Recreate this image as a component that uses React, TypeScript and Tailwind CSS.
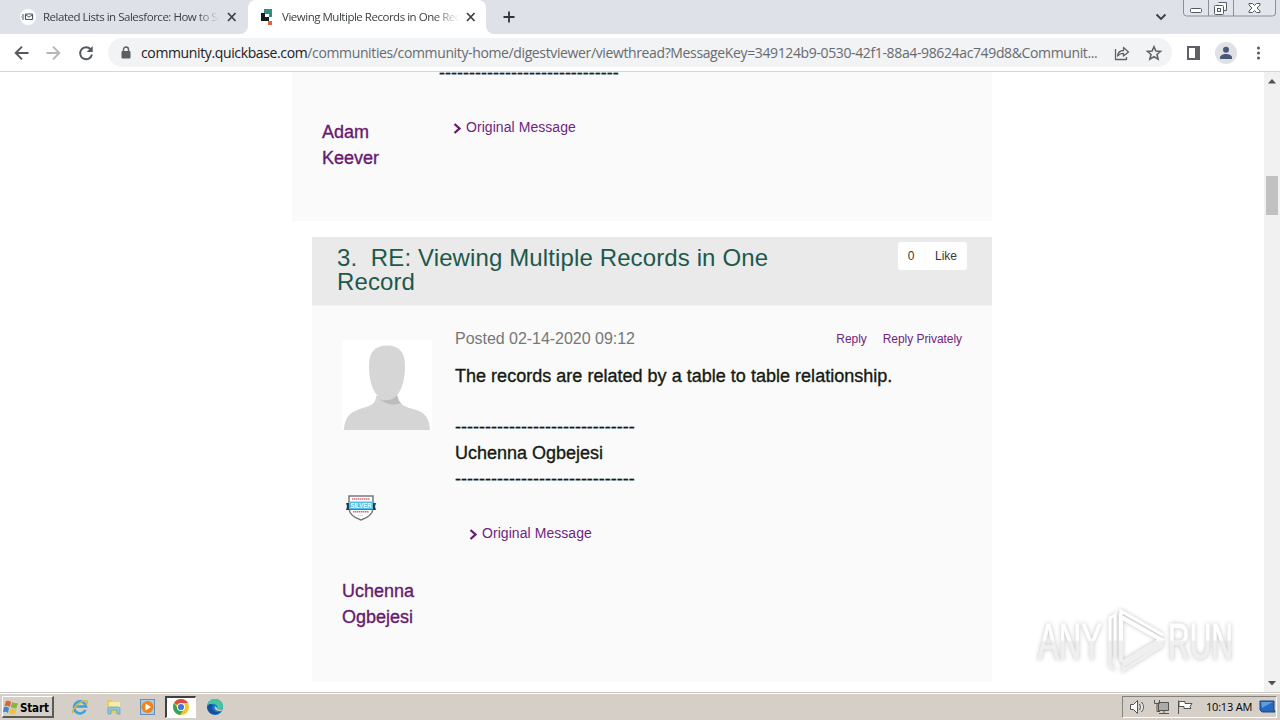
import React from "react";

const DASHES = "------------------------------";
const UI = "font-['Open_Sans','Noto_Sans',sans-serif]";

function MailFavicon() {
  return (
    <svg width="16" height="16" viewBox="0 0 16 16" className="shrink-0">
      <circle cx="8" cy="8" r="8" fill="#fff" />
      <rect x="5.5" y="5" width="7" height="5.5" rx="0.5" fill="#fff" stroke="#4b5563" strokeWidth="1.2" />
      <path d="M5.5 5.5 9 8.2l3.500-2.700M2 6h2M1.500 8h2.500M2 10h2" fill="none" stroke="#4b5563" strokeWidth="1" />
    </svg>
  );
}

function QuickbaseFavicon() {
  return (
    <svg width="14" height="18" viewBox="0 0 14 18" className="shrink-0">
      <path d="M4 1h8v8H9V6H4z" fill="#2f8f85" />
      <path d="M1 5h4v4h4v4H1z" fill="#171d1b" />
      <rect x="8" y="13" width="4" height="4" fill="#e2643f" />
    </svg>
  );
}

function CloseX() {
  return (
    <svg width="10" height="10" viewBox="0 0 10 10" className="shrink-0">
      <path d="M1 1l7.500 8M8.500 1 1 9" stroke="#3c4043" strokeWidth="1.7" />
    </svg>
  );
}

function TabStrip() {
  return (
    <div className="relative flex h-[34px] shrink-0 bg-[#dee1e8]">
      <div className="flex h-[34px] w-[248px] items-center pl-[20px]">
        <MailFavicon />
        <span className="ml-[7px] w-[178px] overflow-hidden whitespace-nowrap text-[11.5px] tracking-[-0.48px] text-[#3c4043] [mask-image:linear-gradient(to_right,#000_86%,transparent_99%)]">
          Related Lists in Salesforce: How to Se
        </span>
        <span className="ml-[6px]"><CloseX /></span>
      </div>
      <div className="relative flex h-[34px] w-[238px] items-center rounded-t-[8px] bg-white pl-[12px]">
        <svg className="absolute bottom-0 left-[-8px]" width="8" height="8"><path d="M8 0v8H0A8 8 0 0 0 8 0z" fill="#fff" /></svg>
        <svg className="absolute right-[-8px] bottom-0" width="8" height="8"><path d="M0 0v8h8A8 8 0 0 1 0 0z" fill="#fff" /></svg>
        <QuickbaseFavicon />
        <span className="ml-[8px] w-[177px] overflow-hidden whitespace-nowrap text-[11.5px] tracking-[-0.48px] text-[#3c4043] [mask-image:linear-gradient(to_right,#000_86%,transparent_100%)]">
          Viewing Multiple Records in One Recor
        </span>
        <span className="ml-[7px]"><CloseX /></span>
      </div>
      <svg width="12" height="12" viewBox="0 0 12 12" className="mt-[11px] ml-[17px]">
        <path d="M6 .5v11M.5 6h11" stroke="#303438" strokeWidth="1.8" />
      </svg>
      <svg width="12" height="8" viewBox="0 0 12 8" className="mt-[13px] ml-auto">
        <path d="M1.500 1.500 6 6l4.500-4.500" fill="none" stroke="#3c4043" strokeWidth="1.900" />
      </svg>
      <svg width="93" height="17" viewBox="0 0 93 17" className="mr-[4px] ml-[16px]">
        <path d="M.5 0v13q0 3 3 3h86q3 0 3-3V0M25.500 0v16M50.500 0v16" fill="#e2e5eb" stroke="#8b8f98" />
        <rect x="7.500" y="8.500" width="11" height="4" rx="1" fill="#fff" stroke="#555a62" />
        <path d="M35.500 2.500h8v8h-3" fill="#fff" stroke="#555a62" />
        <rect x="31.500" y="5.500" width="9" height="9" rx="1" fill="#fff" stroke="#555a62" />
        <rect x="34.500" y="8.500" width="3" height="3" fill="#fff" stroke="#555a62" />
        <path d="M66 3.500h3.500l2 2 2-2H77v1.500l-3 3 3 3v1.500h-3.500l-2-2-2 2H66V11l3-3-3-3z" fill="#fff" stroke="#555a62" />
      </svg>
    </div>
  );
}

function Toolbar() {
  return (
    <div className="flex h-[38px] shrink-0 items-center border-b border-[#d3d6d3] bg-white">
      <svg width="96" height="20" viewBox="0 0 96 20" className="mr-[12px] shrink-0" fill="none" strokeWidth="1.900">
        <path d="M28.500 10H16.500M22 3.700 15.700 10l6.300 6.300" stroke="#55585c" />
        <path d="M46.500 10h12M53 3.700l6.300 6.300-6.300 6.300" stroke="#b4b6b9" />
        <path d="M90.700 6.300A6 6 0 1 0 92 11.500" stroke="#55585c" />
        <path d="M92.700 3v6h-6z" fill="#55585c" />
      </svg>
      <div className="flex h-[29px] w-[1064px] shrink-0 items-center rounded-full bg-[#f1f3f4] pl-[13px]">
        <svg width="10" height="14" viewBox="0 0 10 14" className="shrink-0">
          <rect x=".5" y="5" width="9" height="7.500" rx="1" fill="#5b5e62" />
          <path d="M2.500 6V3.500a2.500 2.500 0 0 1 5 0V6" fill="none" stroke="#5b5e62" strokeWidth="1.400" />
        </svg>
        <span className="ml-[10px] w-[962px] whitespace-nowrap text-[14px] tracking-[-0.37px] text-[#676b70]">
          <span className="text-[#202124]">community.quickbase.com</span>
          /communities/community-home/digestviewer/viewthread?MessageKey=349124b9-0530-42f1-88a4-98624ac749d8&amp;Communit...
        </span>
        <svg width="50" height="18" viewBox="0 0 50 18" className="ml-[10px] shrink-0" fill="none" stroke="#5f6368" strokeWidth="1.300">
          <path d="M2.500 5v10.500h11V13M4.500 12c.5-4 3-5.500 6-5.500V3.500l5 4.500-5 4v-2.700c-3 0-4.500.7-6 2.700z" strokeLinejoin="round" />
          <path d="M41 2.800l1.900 4.300 4.600.4-3.500 3 1.100 4.600L41 12.700l-4.100 2.400L38 10.500l-3.500-3 4.600-.4z" strokeWidth="1.600" />
        </svg>
      </div>
      <svg width="92" height="24" viewBox="0 0 92 24" className="ml-[8px] shrink-0">
        <rect x="8" y="6" width="11" height="12" fill="none" stroke="#5f6063" strokeWidth="2" />
        <rect x="15" y="6" width="5" height="12" fill="#5f6063" />
        <circle cx="46" cy="12" r="11" fill="#dfe1e5" />
        <circle cx="46" cy="8.800" r="3" fill="#4a5878" />
        <path d="M40 18v-1.500c0-2 3-3.500 6-3.500s6 1.500 6 3.500V18z" fill="#4a5878" />
        <g fill="#55585c"><circle cx="78.500" cy="7" r="1.500" /><circle cx="78.500" cy="12" r="1.500" /><circle cx="78.500" cy="17" r="1.500" /></g>
      </svg>
    </div>
  );
}

function OriginalMessage() {
  return (
    <a className="flex h-[20px] items-center gap-[4px] whitespace-nowrap text-[14px] tracking-[0.06px] text-[#6f2480]">
      <svg width="9" height="11" viewBox="0 0 9 11" className="mt-[2px]">
        <path d="M1.500 1 6.500 5.500 1.500 10" fill="none" stroke="#67196f" strokeWidth="2.300" />
      </svg>
      Original Message
    </a>
  );
}

function Avatar() {
  return (
    <svg width="90" height="90" viewBox="0 0 90 90" className="block">
      <rect width="90" height="90" fill="#fff" />
      <path d="M34 56c0 6-3 9-10 11C11 71 3 74 2 90h86c-1-16-8-19-21-22-8-3-10-6-11-12z" fill="#d5d5d5" />
      <path d="M36 58c5 4 13 3 19-4 0 4 1 7 4 9-8 3-16 1-23-5z" fill="#bcbcbc" />
      <path d="M45 5.500c13 0 18 7.500 18 20.500 0 18-6 34-18 34S27 44 27 26C27 13 32 5.500 45 5.500z" fill="#d6d6d6" />
    </svg>
  );
}

function SilverBadge() {
  return (
    <svg width="32" height="28" viewBox="0 0 32 28" className="block">
      <path d="M4 2h24v12c0 6-6 10-12 12C10 24 4 20 4 14z" fill="#fff" stroke="#77797c" strokeWidth="1.500" />
      <path d="M1 9h30l-1 3.500 1 3.500H1l1-3.500z" fill="#243f52" />
      <rect x="4" y="7.500" width="24" height="8" fill="#55bfe8" />
      <text x="16" y="14" textAnchor="middle" textLength="21" lengthAdjust="spacingAndGlyphs" fontSize="7" fontWeight="700" fill="#e8faff" fontFamily="Liberation Sans">SILVER</text>
      <path d="M7 5h18M8 17.800h16" stroke="#d0697c" strokeWidth="1.600" strokeDasharray="1.500 .5" />
      <path d="M13 21.500h6" stroke="#c8c8c8" strokeDasharray="1 1" />
    </svg>
  );
}

function Watermark() {
  return (
    <svg width="204" height="70" viewBox="0 0 204 70" className="absolute top-[533px] left-[1033px] [filter:drop-shadow(0_0_2px_rgba(0,0,0,0.24))]">
      <defs>
        <linearGradient id="wm" x1="0" y1="0" x2="0" y2="70" gradientUnits="userSpaceOnUse">
          <stop offset=".5" stopColor="#fff" />
          <stop offset=".52" stopColor="#efefef" />
        </linearGradient>
      </defs>
      <g fill="url(#wm)" stroke="url(#wm)" strokeWidth="1" fontFamily="Liberation Sans Narrow, Liberation Sans, sans-serif" fontSize="50">
        <text x="5" y="54" textLength="64" lengthAdjust="spacingAndGlyphs">ANY</text>
        <text x="135" y="54" textLength="65" lengthAdjust="spacingAndGlyphs">RUN</text>
      </g>
      <g fill="none" stroke="url(#wm)" strokeWidth="4">
        <path d="M88 57V12l40 22.500L89 58" />
        <path d="M82 53V10l-5 3v48l5 3M88 12V6l42 24M131 36 90 61v4l40-25" strokeWidth="3" />
      </g>
    </svg>
  );
}

function ScrollBar() {
  return (
    <div className="flex w-[16px] shrink-0 flex-col items-center bg-[#f1f1f1]">
      <svg width="8" height="5" className="mt-[7px]"><path d="M0 4.500h8L4 0z" fill="#505050" /></svg>
      <div className="mt-[92px] h-[39px] w-[12px] bg-[#c1c1c1]" />
      <svg width="8" height="5" className="mt-auto mb-[6px]"><path d="M0 0h8L4 4.500z" fill="#505050" /></svg>
    </div>
  );
}

function Thread() {
  return (
    <main className="relative flex h-[620px] shrink-0 overflow-hidden bg-white font-['Liberation_Sans',Arial,sans-serif]">
      <div className="flex flex-1 flex-col pl-[292px]">
        <section className="flex h-[149px] w-[700px] shrink-0 bg-[#fafafa]">
          <a className="w-[147px] pt-[47px] pl-[30px] text-[18px] leading-[26px] text-[#67196f] [-webkit-text-stroke:0.35px]">
            Adam<br />Keever
          </a>
          <div>
            <div className="-mt-[12px] h-[26px] text-[18px] leading-[26px] whitespace-nowrap text-[#1c221c] [-webkit-text-stroke:0.35px]">{DASHES}</div>
            <div className="mt-[31px] pl-[14px]"><OriginalMessage /></div>
          </div>
        </section>
        <article className="mt-[16px] ml-[20px] w-[680px]">
          <header className="flex h-[68px] justify-between bg-[#eaeaea] pr-[25px] pl-[25px]">
            <h2 className="w-[470px] pt-[9px] text-[24px] leading-[24px] tracking-[0.12px] text-[#1d594b]">
              3.&nbsp; RE: Viewing Multiple Records in One<br />Record
            </h2>
            <div className="mt-[5px] flex h-[28px] w-[69px] items-center rounded-[3px] bg-white text-[12px] text-[#35383a]">
              <span className="w-[27px] border-r border-[#fafafa] text-center">0</span>
              <span className="flex-1 text-center">Like</span>
            </div>
          </header>
          <div className="flex h-[377px] border-t border-[#f3f3f3] bg-[#fafafa]">
            <aside className="w-[143px] pt-[34px] pl-[30px]">
              <Avatar />
              <div className="mt-[64px] ml-[3px]"><SilverBadge /></div>
              <a className="mt-[56px] block text-[18px] leading-[26px] text-[#67196f] [-webkit-text-stroke:0.35px]">
                Uchenna<br />Ogbejesi
              </a>
            </aside>
            <div className="flex-1 pt-[22px] pr-[30px]">
              <div className="flex h-[22px] items-center justify-between">
                <span className="text-[16px] tracking-[-0.03px] text-[#777]">Posted 02-14-2020 09:12</span>
                <span className="flex gap-[16px] text-[12px] tracking-[-0.05px] text-[#6f2480]"><a>Reply</a><a>Reply Privately</a></span>
              </div>
              <div className="mt-[13px] text-[18px] leading-[26px] whitespace-nowrap text-[#151a12] [-webkit-text-stroke:0.35px]">
                <p className="tracking-[0.02px]">The records are related by a table to table relationship.</p>
                <p className="mt-[25px]">{DASHES}</p>
                <p>Uchenna Ogbejesi</p>
                <p>{DASHES}</p>
              </div>
              <div className="mt-[31px] pl-[14px]"><OriginalMessage /></div>
            </div>
          </div>
        </article>
      </div>
      <ScrollBar />
      <Watermark />
    </main>
  );
}

function TaskIcons() {
  return (
    <>
      <svg width="18" height="18" viewBox="0 0 18 18" className="ml-[17px]">
        <path d="M14.500 12A6 6 0 1 1 15 8.500H4" fill="none" stroke="#3ca3dc" strokeWidth="2.600" />
        <path d="M2 15C0 12 10 1 16 3c1 1 0 3-1 4" fill="none" stroke="#d8b543" strokeWidth="1.400" />
      </svg>
      <svg width="18" height="18" viewBox="0 0 18 18" className="ml-[16px]">
        <path d="M2 2h5l1 2h6v11H2z" fill="#e9c964" />
        <path d="M4 4h11v7H4z" fill="#f8eba5" />
        <path d="M3 16v-5q0-2 2-2h8q2 0 2 2v5h-3v-4H6v4z" fill="#8bc8e2" stroke="#569dbd" strokeWidth=".7" />
      </svg>
      <svg width="18" height="18" viewBox="0 0 18 18" className="ml-[16px]">
        <rect x="1.500" y="1.500" width="14" height="15" fill="#a9cae8" stroke="#668fb9" />
        <circle cx="8.500" cy="9" r="6" fill="#ee851c" />
        <path d="M6.500 5.500v7l5.500-3.500z" fill="#fff" />
      </svg>
      <div className="ml-[8px] flex h-[22px] w-[31px] items-center justify-center border-t-2 border-r border-b border-l-2 border-t-[#404040] border-r-white border-b-white border-l-[#404040] bg-white">
        <svg width="16" height="16" viewBox="0 0 16 16" className="-mt-[2px]">
          <circle cx="8" cy="8" r="8" fill="#f4c32e" />
          <path d="M8 8 1.100 4A8 8 0 0 1 14.900 4H8z" fill="#dd4b3e" />
          <path d="M1.100 4A8 8 0 0 0 7 15.900L11 10 5 10z" fill="#35a457" />
          <circle cx="8" cy="8" r="4" fill="#fff" />
          <circle cx="8" cy="8" r="3.100" fill="#3f78d8" />
        </svg>
      </div>
      <svg width="18" height="18" viewBox="0 0 18 18" className="ml-[10px]">
        <circle cx="9" cy="9" r="8" fill="#1879c4" />
        <path d="M1 8C2 3 5 1 9 1c5 0 8 4 8 7 0 4-4 4-6 3 2-4-4-8-10-3z" fill="#45c6a1" />
        <path d="M7 7c-2 3 0 8 7 7-3 4-12 3-13-5 1-3 4-4 6-2z" fill="#174f9d" />
        <path d="M9 8c-1 3 1 5 6 5l2-2c-3 1-6 1-6-1z" fill="#d5cfc8" />
      </svg>
    </>
  );
}

function Taskbar() {
  return (
    <footer className="flex h-[28px] shrink-0 items-center border-t border-[#c9c6c0] bg-[#d5cfc8] pt-[1px] shadow-[inset_0_1px_0_#fff]">
      <button className="ml-[2px] flex h-[22px] w-[52px] items-center border-t border-r-2 border-b-2 border-l border-t-white border-r-[#5c5a56] border-b-[#5c5a56] border-l-white">
        <svg width="16" height="16" viewBox="0 0 16 16" className="shrink-0">
          <path d="M3 2q3-1 5 1L7 8Q4 6 1.500 7z" fill="#e2632f" />
          <path d="M9 3q3 2 6 1l-1.500 5Q11 10 8 8z" fill="#82b63c" />
          <path d="M1 8q3-1 5 1l-1 5Q3 12 0 13z" fill="#4387cb" />
          <path d="M7.500 9q3 2 6 1L12 15q-3 1-6-1z" fill="#efc23a" />
        </svg>
        <span className="ml-[1px] pt-[2px] text-[11.5px] leading-[16px] font-bold tracking-[-0.15px] text-black font-['DejaVu_Sans_Condensed','DejaVu_Sans',sans-serif]">Start</span>
      </button>
      <TaskIcons />
      <div className="mr-[3px] ml-auto flex h-[22px] w-[155px] items-center border border-t-[#85827c] border-r-white border-b-white border-l-[#85827c] pl-[6px]">
        <svg width="66" height="18" viewBox="0 0 66 18" className="shrink-0" fill="#fff" stroke="#55534f">
          <path d="M1.500 6.500h3l4-4v13l-4-4h-3zM10.500 6q2 3 0 6M12.500 4q4 5 0 10" />
          <path d="M29.500 4.500h10v8h-10z" fill="#aaa" />
          <path d="M25.500 2v3.500h5V2M28 5.500v8h3M30 15.500h10M35 13v2" fill="none" />
          <path d="M49.500 16V2.500M50 3.500h6v2h7l-2 3 1 2h-7v-2h-5z" />
        </svg>
        <span className="ml-[11px] w-[48px] whitespace-nowrap text-[11px] tracking-[-0.2px] text-black">10:13 AM</span>
        <svg width="17" height="14" viewBox="0 0 17 14" className="ml-[6px] shrink-0">
          <path d="M1 1h14v9l1 2H3l-2-2z" fill="#2868bd" stroke="#1b447f" />
          <path d="M2 2h12L3 8z" fill="#5d9ce0" />
        </svg>
      </div>
    </footer>
  );
}

export default function App() {
  return (
    <div className={`flex h-[720px] w-[1280px] flex-col overflow-hidden bg-white ${UI}`}>
      <TabStrip />
      <Toolbar />
      <Thread />
      <Taskbar />
    </div>
  );
}
